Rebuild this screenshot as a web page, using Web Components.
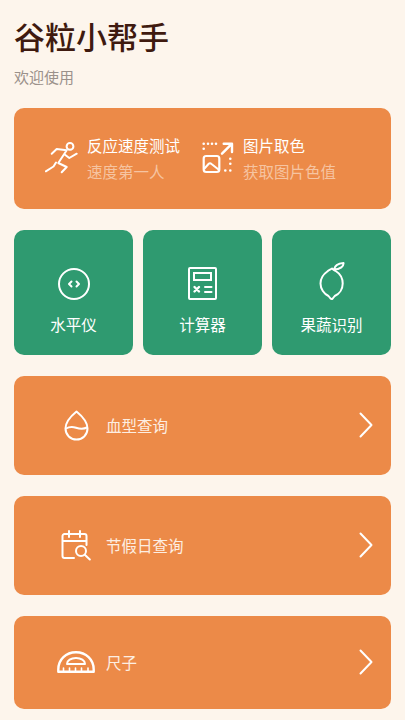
<!DOCTYPE html>
<html lang="zh">
<head>
<meta charset="utf-8">
<title>谷粒小帮手</title>
<style>
    html, body { margin: 0; padding: 0; background: #fdf5ec; }
    body { font-family: "Noto Sans CJK SC", "Noto Sans", sans-serif; }
</style>
</head>
<body>
<home-page>
    <page-header heading="谷粒小帮手" sub="欢迎使用"></page-header>
    <top-card>
        <quick-item icon="runner" name="反应速度测试" desc="速度第一人"></quick-item>
        <quick-item icon="picker" name="图片取色" desc="获取图片色值"></quick-item>
    </top-card>
    <tile-row>
        <grid-tile icon="level" name="水平仪"></grid-tile>
        <grid-tile icon="calc" name="计算器"></grid-tile>
        <grid-tile icon="lemon" name="果蔬识别"></grid-tile>
    </tile-row>
    <list-row icon="drop" name="血型查询"></list-row>
    <list-row icon="calendar" name="节假日查询"></list-row>
    <list-row icon="ruler" name="尺子" short></list-row>
</home-page>

<script>
const icons = {
    runner: `<svg width="33" height="32" viewBox="0 -1 33 32"><g fill="none" stroke="#fff" stroke-width="2" stroke-linecap="round" stroke-linejoin="round">
        <circle cx="25" cy="3.400" r="3.400"/>
        <path d="M6.700 10.700L11.700 6l10 1.300-8.400 12.700 8.400 4-5 5.300"/>
        <path d="M20 11.700l4.300 3.300 7.400-4.300"/>
        <path d="M11 19.500l-2.500 4L.8 28.300"/></g></svg>`,
    picker: `<svg width="32" height="32" viewBox="0 0 32 32"><g fill="none" stroke="#fff" stroke-linecap="round" stroke-linejoin="round">
        <path stroke-width="2.400" d="M21.700 1.700H30V10M29.500 2.200L20 11.700"/>
        <rect stroke-width="2.200" x="1.700" y="14" width="15.600" height="16" rx="2.500"/>
        <path stroke-width="2" d="M2.500 26.500l4-4.500c1-1 2-1 3 0l7 5.500"/>
        <path stroke-width="2.600" d="M1.700 1.700h.01M6 1.700h.01M10 1.700h.01M14 1.700h.01M1.700 6.700h.01M28.300 16.700h.01M28.300 21.700h.01M23.300 28.500h.01M28.300 28.500h.01"/></g></svg>`,
    level: `<svg width="32" height="34" viewBox="0 0 32 34"><g fill="none" stroke="#fff" stroke-linecap="round" stroke-linejoin="round">
        <circle stroke-width="2" cx="16" cy="17" r="15"/>
        <path stroke-width="2" d="M13.500 14.500l-2.500 2.500 2.500 2.500M18.500 14.500l2.500 2.500-2.500 2.500"/></g></svg>`,
    calc: `<svg width="29" height="33" viewBox="0 0 29 33"><g fill="none" stroke="#fff" stroke-linecap="round">
        <rect stroke-width="2" x="1" y="1" width="27" height="31" rx="1"/>
        <rect stroke-width="2" x="6" y="6" width="17" height="7"/>
        <path stroke-width="2.400" d="M6.500 20l4.500 4.500M11 20l-4.500 4.500"/>
        <path stroke-width="2" d="M17 20h6.500M17 25h6.500"/></g></svg>`,
    lemon: `<svg width="26" height="44" viewBox="0 0 26 44"><g fill="none" stroke="#fff" stroke-width="2" stroke-linecap="round" stroke-linejoin="round">
        <path d="M13 6.500C11 7.800 9.800 8 8.300 9.500 4 12.500 1.500 17 1.500 21.500c0 5.500 3.500 10.500 8 12.500l2 2.500c.8.700 1.500.700 2.200 0l2-2.500c4.800-2 8-7 8-12.500 0-5-3-10-7-12.500C15 8 14 7.500 13 6.500z"/>
        <path d="M15 7.500c.5-3 3.500-6 9.500-6.500.3 3-3 6.500-9.500 6.500z"/></g></svg>`,
    drop: `<svg width="25" height="31" viewBox="0 0 25 31"><g fill="none" stroke="#fff" stroke-width="2" stroke-linecap="round" stroke-linejoin="round">
        <path d="M12.500 1.500C7 6 1.500 12 1.500 18.500 1.500 25 6.500 29.500 12.500 29.500s11-4.500 11-11C23.500 12 18 6 12.500 1.500z"/>
        <path d="M2 18.500c3.500-2 6.500-2 10-.8s7 1.800 11-.2"/></g></svg>`,
    calendar: `<svg width="30" height="31" viewBox="0 0 30 31"><g fill="none" stroke="#fff" stroke-width="2" stroke-linecap="round" stroke-linejoin="round">
        <path d="M13 28H3.500A2 2 0 0 1 1.500 26V6A2 2 0 0 1 3.500 4h20a2 2 0 0 1 2 2v9"/>
        <path d="M2 11h23M8 1v6M19 1v6"/>
        <circle cx="20" cy="21" r="5"/>
        <path d="M23.800 24.800l5 4.700"/></g></svg>`,
    ruler: `<svg width="38" height="22" viewBox="0 0 38 22"><g fill="none" stroke="#fff" stroke-linecap="round" stroke-linejoin="round">
        <path stroke-width="2.400" d="M1.300 20.700V18.500C1.300 8.500 9 1.300 19 1.300S36.700 8.500 36.700 18.500v2.200z"/>
        <path stroke-width="2" d="M10 13c0-3.500 4-6 9-6s9 2.500 9 6z"/>
        <path stroke-width="1.600" d="M6.500 20v-3M12.500 20v-3M18.500 20v-3M24.500 20v-3M31 20v-3"/></g></svg>`
}

class PageHeader extends HTMLElement {
    connectedCallback() {
        this.attachShadow({ mode: "open" }).innerHTML = `
        <style>
            :host { display: block; padding: 16px 0 21px 0; }
            h1 { margin: 0; font-size: 31px; line-height: 40px; font-weight: 500; color: #3f1a0f; }
            p { margin: 11px 0 0; font-size: 15px; line-height: 20px; color: #9b918b; }
        </style>
        <h1>${this.getAttribute("heading")}</h1>
        <p>${this.getAttribute("sub")}</p>`
    }
}

class TopCard extends HTMLElement {
    connectedCallback() {
        this.attachShadow({ mode: "open" }).innerHTML = `
        <style>
            :host { display: flex; box-sizing: border-box; height: 101px; padding: 0 0 2px 31px; gap: 22px; align-items: center;
                background: #ec8a48; border-radius: 10px; }
        </style>
        <slot></slot>`
    }
}

class QuickItem extends HTMLElement {
    connectedCallback() {
        this.attachShadow({ mode: "open" }).innerHTML = `
        <style>
            :host { display: flex; align-items: center; gap: 9px; }
            .ic { display: flex; }
            .name { font-size: 15.500px; line-height: 20px; color: #fff; }
            .desc { font-size: 15.500px; line-height: 20px; margin-top: 6px; color: #f6c4a1; }
        </style>
        <div class="ic">${icons[this.getAttribute("icon")]}</div>
        <div><div class="name">${this.getAttribute("name")}</div><div class="desc">${this.getAttribute("desc")}</div></div>`
    }
}

class TileRow extends HTMLElement {
    connectedCallback() {
        this.attachShadow({ mode: "open" }).innerHTML = `
        <style>
            :host { display: grid; grid-template-columns: repeat(3, 1fr); gap: 10px; }
        </style>
        <slot></slot>`
    }
}

class GridTile extends HTMLElement {
    connectedCallback() {
        this.attachShadow({ mode: "open" }).innerHTML = `
        <style>
            :host { display: flex; flex-direction: column; align-items: center; height: 125.500px; box-sizing: border-box;
                background: #2f9a70; border-radius: 10px; color: #fff; font-size: 15.500px; }
            .ic { height: 44px; margin-top: 32px; display: flex; align-items: center; justify-content: center; }
            .name { margin-top: 7px; line-height: 22px; }
        </style>
        <div class="ic">${icons[this.getAttribute("icon")]}</div>
        <div class="name">${this.getAttribute("name")}</div>`
    }
}

class ListRow extends HTMLElement {
    connectedCallback() {
        this.attachShadow({ mode: "open" }).innerHTML = `
        <style>
            :host { display: flex; align-items: center; height: 99.500px; background: #ec8a48; border-radius: 10px; color: #fff; font-size: 15.500px; }
            :host([short]) { height: 93px; }
            .ic { width: 92px; display: flex; justify-content: center; padding-left: 32px; box-sizing: border-box; }
            .name { flex: 1; color: #fdeee2; }
            svg.arrow { margin-right: 18px; }
        </style>
        <div class="ic">${icons[this.getAttribute("icon")]}</div>
        <div class="name">${this.getAttribute("name")}</div>
        <svg class="arrow" width="14" height="26" viewBox="0 0 14 26"><path d="M1.500 1.500L12.500 13 1.500 24.500" fill="none" stroke="#fff" stroke-width="2" stroke-linecap="round" stroke-linejoin="round"/></svg>`
    }
}

class HomePage extends HTMLElement {
    connectedCallback() {
        this.attachShadow({ mode: "open" }).innerHTML = `
        <style>
            :host { display: flex; flex-direction: column; gap: 20.500px; box-sizing: border-box; width: 405px; height: 720px; padding: 0 14px; overflow: hidden; }
            ::slotted(page-header) { margin-bottom: -20.500px; }
        </style>
        <slot></slot>`
    }
}

customElements.define("page-header", PageHeader)
customElements.define("top-card", TopCard)
customElements.define("quick-item", QuickItem)
customElements.define("tile-row", TileRow)
customElements.define("grid-tile", GridTile)
customElements.define("list-row", ListRow)
customElements.define("home-page", HomePage)
</script>
</body>
</html>
